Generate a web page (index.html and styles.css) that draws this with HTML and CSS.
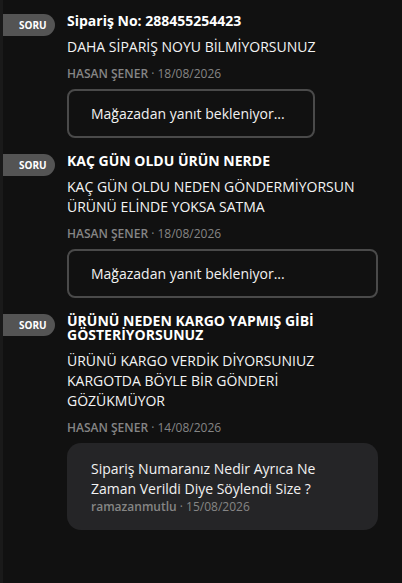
FILE: index.html
```html
<!DOCTYPE html>
<html lang="tr">
<head>
<meta charset="utf-8">
<title>Sorular</title>
<link rel="stylesheet" href="styles.css">
</head>
<body>
<div class="page">
  <article class="qa">
    <span class="badge">SORU</span>
    <div class="content">
      <h3 class="title">Sipariş No: 288455254423</h3>
      <p class="text">DAHA SİPARİŞ NOYU BİLMİYORSUNUZ</p>
      <div class="meta"><span class="author">HASAN ŞENER</span> · 18/08/2026</div>
      <div class="pending">Mağazadan yanıt bekleniyor...</div>
    </div>
  </article>
  <article class="qa">
    <span class="badge">SORU</span>
    <div class="content">
      <h3 class="title">KAÇ GÜN OLDU ÜRÜN NERDE</h3>
      <p class="text">KAÇ GÜN OLDU NEDEN GÖNDERMİYORSUN ÜRÜNÜ ELİNDE YOKSA SATMA</p>
      <div class="meta"><span class="author">HASAN ŞENER</span> · 18/08/2026</div>
      <div class="pending">Mağazadan yanıt bekleniyor...</div>
    </div>
  </article>
  <article class="qa">
    <span class="badge">SORU</span>
    <div class="content">
      <h3 class="title">ÜRÜNÜ NEDEN KARGO YAPMIŞ GİBİ GÖSTERİYORSUNUZ</h3>
      <p class="text">ÜRÜNÜ KARGO VERDİK DİYORSUNIUZ KARGOTDA BÖYLE BİR GÖNDERİ GÖZÜKMÜYOR</p>
      <div class="meta"><span class="author">HASAN ŞENER</span> · 14/08/2026</div>
      <div class="answer">
        <p class="answer-text">Sipariş Numaranız Nedir Ayrıca Ne Zaman Verildi Diye Söylendi Size ?</p>
        <div class="answer-meta"><span class="seller">ramazanmutlu</span> · 15/08/2026</div>
      </div>
    </div>
  </article>
</div>
</body>
</html>
```

FILE: styles.css
```css
html, body {
  margin: 0;
  padding: 0;
  background: #111111;
}

body {
  font-family: "Open Sans", "Noto Sans", sans-serif;
  color: #f2f2f2;
  height: 583px;
  overflow: hidden;
}

.page {
  min-height: 583px;
  box-sizing: border-box;
  border-left: 3px solid #1a1a1a;
  padding: 14px 24px 0 0;
  display: flex;
  flex-direction: column;
  gap: 16px;
}

.qa {
  display: flex;
  align-items: flex-start;
  gap: 12px;
}

.badge {
  flex-shrink: 0;
  width: 52px;
  height: 22px;
  box-sizing: border-box;
  padding-left: 16px;
  background: #545454;
  border-radius: 0 11px 11px 0;
  color: #ffffff;
  font-size: 10px;
  font-weight: 700;
  line-height: 22px;
}

.content {
  flex: 0 1 auto;
  min-width: 0;
}

.title {
  margin: 0 0 9px;
  font-size: 14px;
  font-weight: 700;
  line-height: 14px;
  color: #ffffff;
}

.text {
  margin: 0 0 8px;
  font-size: 14px;
  line-height: 20px;
  color: #f4f4f4;
}

.meta {
  font-size: 12px;
  line-height: 18px;
  color: #858585;
  margin-bottom: 6px;
}

.author {
  font-weight: 600;
}

.pending {
  border: 2px solid #4a4a4a;
  border-radius: 8px;
  padding: 12px 22px;
  font-size: 14px;
  line-height: 21px;
  color: #f2f2f2;
}

.answer {
  background: #252527;
  border-radius: 14px;
  padding: 16px 24px 14px;
}

.answer-text {
  margin: 0;
  font-size: 14px;
  line-height: 19.5px;
  color: #f2f2f2;
}

.answer-meta {
  font-size: 12px;
  line-height: 18px;
  color: #858585;
}

.seller {
  font-weight: 600;
}
```
